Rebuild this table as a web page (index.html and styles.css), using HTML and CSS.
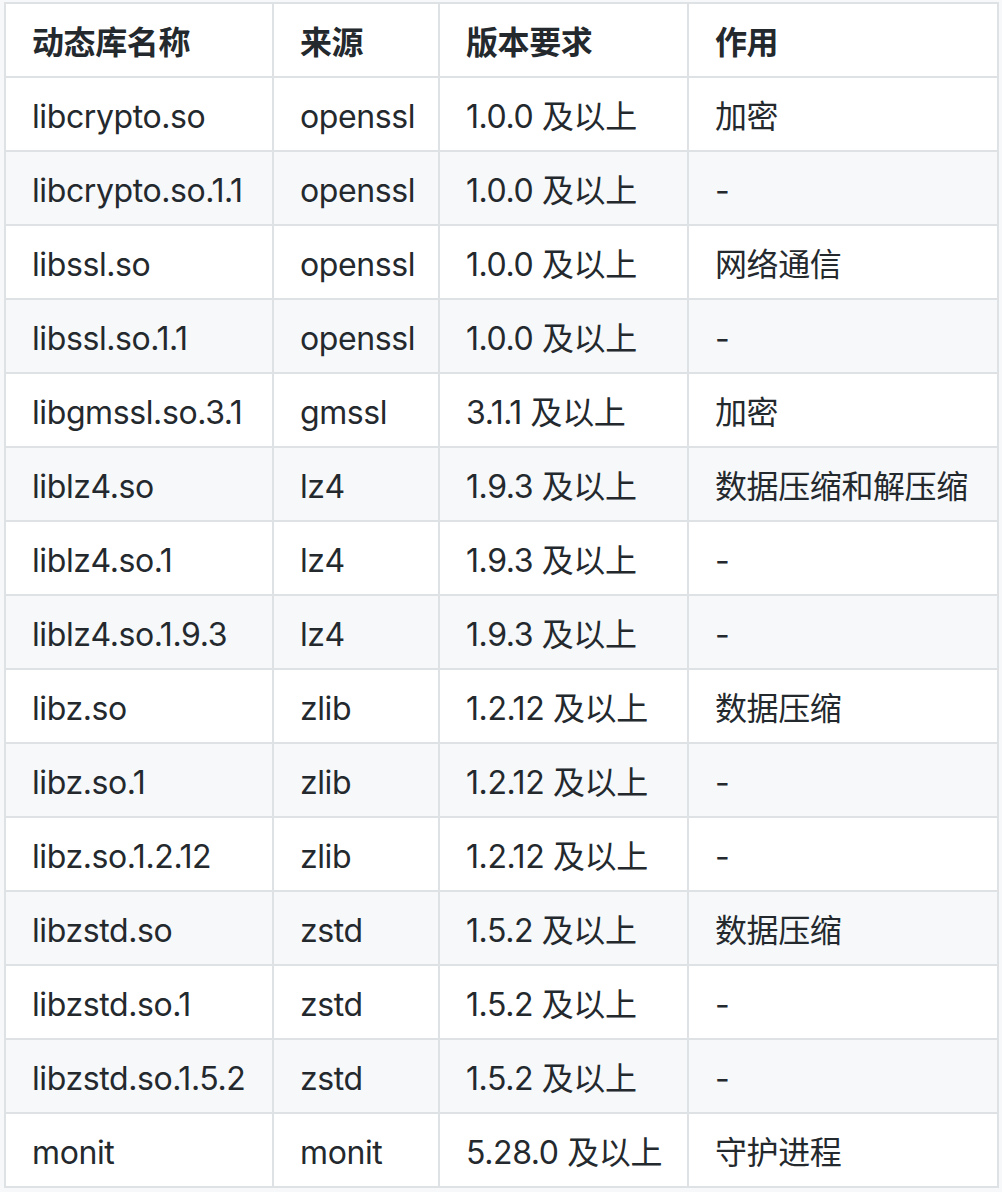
FILE: index.html
```html
<!DOCTYPE html>
<html lang="zh-CN">
<head>
<meta charset="utf-8">
<link rel="stylesheet" href="styles.css">
</head>
<body>
<table class="deps">
  <colgroup>
    <col class="c1"><col class="c2"><col class="c3"><col class="c4">
  </colgroup>
  <thead>
    <tr><th>动态库名称</th><th>来源</th><th>版本要求</th><th>作用</th></tr>
  </thead>
  <tbody>
    <tr><td>libcrypto.so</td><td>openssl</td><td>1.0.0 及以上</td><td>加密</td></tr>
    <tr><td>libcrypto.so.1.1</td><td>openssl</td><td>1.0.0 及以上</td><td>-</td></tr>
    <tr><td>libssl.so</td><td>openssl</td><td>1.0.0 及以上</td><td>网络通信</td></tr>
    <tr><td>libssl.so.1.1</td><td>openssl</td><td>1.0.0 及以上</td><td>-</td></tr>
    <tr><td>libgmssl.so.3.1</td><td>gmssl</td><td>3.1.1 及以上</td><td>加密</td></tr>
    <tr><td>liblz4.so</td><td>lz4</td><td>1.9.3 及以上</td><td>数据压缩和解压缩</td></tr>
    <tr><td>liblz4.so.1</td><td>lz4</td><td>1.9.3 及以上</td><td>-</td></tr>
    <tr><td>liblz4.so.1.9.3</td><td>lz4</td><td>1.9.3 及以上</td><td>-</td></tr>
    <tr><td>libz.so</td><td>zlib</td><td>1.2.12 及以上</td><td>数据压缩</td></tr>
    <tr><td>libz.so.1</td><td>zlib</td><td>1.2.12 及以上</td><td>-</td></tr>
    <tr><td>libz.so.1.2.12</td><td>zlib</td><td>1.2.12 及以上</td><td>-</td></tr>
    <tr><td>libzstd.so</td><td>zstd</td><td>1.5.2 及以上</td><td>数据压缩</td></tr>
    <tr><td>libzstd.so.1</td><td>zstd</td><td>1.5.2 及以上</td><td>-</td></tr>
    <tr><td>libzstd.so.1.5.2</td><td>zstd</td><td>1.5.2 及以上</td><td>-</td></tr>
    <tr><td>monit</td><td>monit</td><td>5.28.0 及以上</td><td>守护进程</td></tr>
  </tbody>
</table>
</body>
</html>
```
FILE: styles.css
```css
html, body {
  margin: 0;
  padding: 0;
  background: #f6f8fa;
}
body {
  padding: 2px 0 0 4px;
  font-family: Inter, "Noto Sans CJK SC", sans-serif;
  color: #24292e;
}
.deps {
  border-collapse: collapse;
  table-layout: fixed;
  width: 995px;
  font-size: 32px;
  line-height: 48px;
  letter-spacing: -0.4px;
  background: #fff;
}
.c1 { width: 268px; }
.c2 { width: 166px; }
.c3 { width: 249px; }
.c4 { width: 310px; }
.deps th,
.deps td {
  border: 2px solid #dfe2e5;
  padding: 15px 26px 9px;
  text-align: left;
  white-space: nowrap;
  vertical-align: middle;
}
.deps th {
  font-weight: 700;
}
.deps tbody tr:nth-child(odd) { background: #fff; }
.deps tbody tr:nth-child(even) { background: #f6f8fa; }
```
